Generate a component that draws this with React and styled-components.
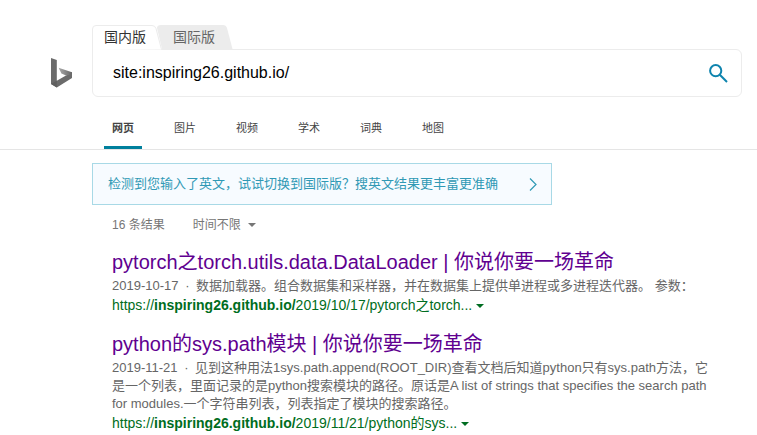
import React from 'react';
import styled, { createGlobalStyle } from 'styled-components';

const Global = createGlobalStyle`
  * { box-sizing: border-box; }
  body { margin: 0; background: #fff; font-family: "Liberation Sans", "Noto Sans CJK SC", sans-serif; overflow: hidden; }
`;
const Page = styled.div`width: 757px; height: 435px; overflow: hidden;`;
const Header = styled.header`display: flex; height: 150px; padding-top: 25px; border-bottom: 1px solid #e5e5e5;`;
const Brand = styled.a`width: 92px; flex: none; padding: 33px 0 0 51px;`;
const Main = styled.div`width: 650px;`;
const Tabs = styled.div`display: flex; height: 24px;`;
const Tab = styled.div`
  display: grid; height: ${p => (p.$active ? 25 : 24)}px; width: ${p => (p.$active ? 69 : 72)}px;
  font-size: 14px; line-height: 24px; color: ${p => (p.$active ? '#333' : '#666')};
  > * { grid-area: 1 / 1; }
  > svg { display: block; overflow: visible; }
  > span { padding-left: 12px; z-index: 1; }
`;
const SearchBox = styled.div`
  display: flex; justify-content: space-between; align-items: center; height: 48px; padding: 0 13px 0 20px;
  border: 1px solid #ececec; border-radius: 0 6px 6px 6px; font-size: 16px; color: #000;
  svg { display: block; }
`;
const Scopes = styled.nav`display: flex; gap: 24px; padding: 10px 0 0 12px;`;
const Scope = styled.a`
  height: 42px; width: 38px; text-align: center; line-height: 42px; font-size: 11px;
  color: #444; font-weight: ${p => (p.$active ? 700 : 400)};
  border-bottom: ${p => (p.$active ? '3px solid #00809d' : '0')};
`;
const Content = styled.main`padding: 13px 0 0 92px;`;
const Notice = styled.div`
  display: flex; align-items: center; justify-content: space-between; width: 460px; height: 42px; padding: 0 14px 0 15px;
  background: #f7fbff; border: 1px solid #a8d9e6; color: #3099b5; font-size: 13px;
  span { padding-bottom: 3px; }
`;
const Filters = styled.div`
  display: flex; gap: 28px; height: 44px; padding: 11px 0 0 20px; font-size: 12px; line-height: 18px; color: #767676;
`;
const Caret = styled.i`
  display: inline-block; margin-left: ${p => p.$gap}px; vertical-align: 2px;
  border: 4px solid transparent; border-top-color: currentColor; border-bottom: 0;
`;
const Result = styled.article`width: 640px; padding-left: 20px; margin-bottom: 16px;`;
const Title = styled.h2`margin: 0 0 2px; font-size: 20px; line-height: 26px; font-weight: 400; color: #600090;`;
const Text = styled.p`margin: 0; font-size: 13px; line-height: 18px; color: #666;`;
const Dot = styled.span`margin: 0 3px;`;
const Url = styled.div`font-size: 14px; line-height: 20px; color: #006d21;`;

const BingLogo = () => (
  <svg width="22" height="30" viewBox="0 0 22 30">
    <defs>
      <linearGradient id="facet" x1="0" y1="0" x2="1" y2="0">
        <stop offset="0" stopColor="#aaa" /><stop offset="1" stopColor="#666" />
      </linearGradient>
    </defs>
    <path d="M0 0 5.8 2V22.7L15 17.4 21 14.3V20L5.8 29.4 0 26Z" fill="#6b6b6b" />
    <path d="M0 26 5.8 22.7V29.4Z" fill="#5f5f5f" />
    <path d="M7.6 9.7 21 14.3V16L15 17.6 10.4 15.6Z" fill="url(#facet)" />
  </svg>
);

export default function App() {
  return (
    <>
      <Global />
      <Page>
        <Header>
          <Brand><BingLogo /></Brand>
          <Main>
            <Tabs>
              <Tab $active>
                <svg width="69" height="25"><path d="M.5 25V4Q.5.5 4 .5H60Q63 .5 64 3.5L69.5 24.5" fill="#fff" stroke="#ececec" /></svg>
                <span>国内版</span>
              </Tab>
              <Tab>
                <svg width="72" height="24"><path d="M0 0H62Q65 0 66 3L71.5 24H1L-4 3Q-4 0 0 0Z" fill="#ececec" /></svg>
                <span>国际版</span>
              </Tab>
            </Tabs>
            <SearchBox>
              site:inspiring26.github.io/
              <svg width="19" height="19" fill="none" stroke="#0e84ae" strokeWidth="2"><circle cx="6.7" cy="6.7" r="5.6" /><path d="m10.8 10.8 7.2 7.2" /></svg>
            </SearchBox>
            <Scopes>
              <Scope $active>网页</Scope><Scope>图片</Scope><Scope>视频</Scope><Scope>学术</Scope><Scope>词典</Scope><Scope>地图</Scope>
            </Scopes>
          </Main>
        </Header>
        <Content>
          <Notice>
            <span>检测到您输入了英文，试试切换到国际版？搜英文结果更丰富更准确</span>
            <svg width="8" height="13" fill="none" stroke="#3099b5" strokeWidth="1.2"><path d="m1 .5 6 6-6 6" /></svg>
          </Notice>
          <Filters><span>16 条结果</span><span>时间不限<Caret $gap={7} /></span></Filters>
          <Result>
            <Title>pytorch之torch.utils.data.DataLoader | 你说你要一场革命</Title>
            <Text>2019-10-17 <Dot>·</Dot> 数据加载器。组合数据集和采样器，并在数据集上提供单进程或多进程迭代器。 参数：</Text>
            <Url>https://<b>inspiring26.github.io/</b>2019/10/17/pytorch之torch...<Caret $gap={4} /></Url>
          </Result>
          <Result>
            <Title>python的sys.path模块 | 你说你要一场革命</Title>
            <Text>
              2019-11-21 <Dot>·</Dot> 见到这种用法1sys.path.append(ROOT_DIR)查看文档后知道python只有sys.path方法，它<br />
              是一个列表，里面记录的是python搜索模块的路径。原话是A list of strings that specifies the search path<br />
              for modules.一个字符串列表，列表指定了模块的搜索路径。
            </Text>
            <Url>https://<b>inspiring26.github.io/</b>2019/11/21/python的sys...<Caret $gap={4} /></Url>
          </Result>
        </Content>
      </Page>
    </>
  );
}
